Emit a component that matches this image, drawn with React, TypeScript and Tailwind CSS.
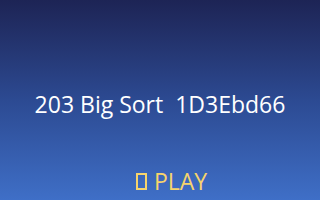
export default function App() {
  return (
    <div
      className="w-[320px] h-[200px] flex flex-col items-center bg-gradient-to-b from-[#1d2455] via-[#2c4a92] to-[#3f6fc7] text-white"
      style={{ fontFamily: "'Open Sans', 'Noto Sans', sans-serif" }}
    >
      <div className="pt-[93px] h-[170px]">
        <h1 className="text-[23px] leading-none font-normal whitespace-pre">203 Big Sort  1D3Ebd66</h1>
      </div>
      <button className="ml-[23px] flex items-center gap-[7px] text-[23px] leading-none text-[#f6d46c]">
        <span className="inline-block w-[11px] h-[17px] border-2 border-[#f6d46c]" />
        <span>PLAY</span>
      </button>
    </div>
  );
}
